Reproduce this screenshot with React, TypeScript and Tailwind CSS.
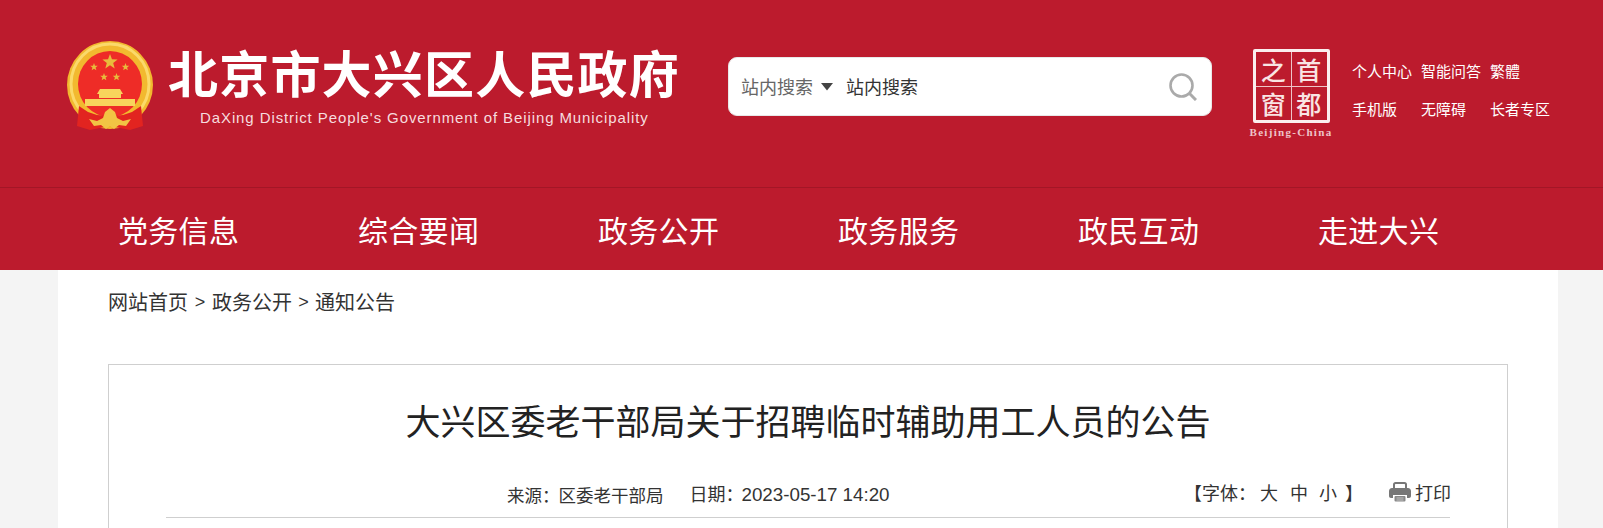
const NAV_ITEMS = ['党务信息', '综合要闻', '政务公开', '政务服务', '政民互动', '走进大兴'];

const cjk = "font-['Noto_Sans_CJK_SC','Liberation_Sans',sans-serif]";

function Star({ x, y, r }: { x: number; y: number; r: number }) {
  const points = Array.from({ length: 10 }, (_, i) => {
    const radius = i % 2 === 0 ? r : r * 0.42;
    const angle = (Math.PI / 5) * i - Math.PI / 2;
    return `${x + radius * Math.cos(angle)},${y + radius * Math.sin(angle)}`;
  }).join(' ');
  return <polygon points={points} fill="#e8bb3c" />;
}

function Emblem() {
  return (
    <svg viewBox="17 11 86 90" className="h-[90px] w-[86px] shrink-0">
      <ellipse cx="60" cy="55" rx="43" ry="44" fill="#f2b92f" />
      <ellipse cx="60" cy="54" rx="39" ry="40" fill="none" stroke="#fbd96a" strokeWidth="3" />
      <ellipse cx="60" cy="54" rx="32" ry="33" fill="#ee2c27" />
      <Star x={60} y={32} r={8} />
      <Star x={44} y={37} r={4} />
      <Star x={75.500} y={37} r={4} />
      <Star x={54} y={47} r={4} />
      <Star x={66.500} y={47} r={4} />
      <path d="M50 59h20l3 5h-2v4H49v-4h-2z" fill="#f8d45c" />
      <rect x="35" y="69" width="50" height="7" fill="#f8d45c" />
      <path d="M29 76l9 6 9 3 13 1 13-1 9-3 9-6 2 20-13 4-20-4-20 4-13-4z" fill="#e22420" />
      <path d="M39 89l8 2 6-3 2-6 5-4 5 4 2 6 6 3 8-2-5 7-7-1-5 4-4-3-4 3-5-4-7 1z" fill="#f2c444" />
    </svg>
  );
}

function SealLogo() {
  return (
    <div className="flex w-[84px] shrink-0 flex-col items-center">
      <div className="relative grid h-[74px] w-[77px] grid-cols-2 grid-rows-2 rounded-[2px] border-[3px] border-[#fbeeee] text-[25px] leading-none font-medium text-[#f9e4e4]">
        <span className="flex items-center justify-center">之</span>
        <span className="flex items-center justify-center">首</span>
        <span className="flex items-center justify-center">窗</span>
        <span className="flex items-center justify-center">都</span>
        <div className="absolute inset-x-0 top-1/2 border-t border-[#eec4c8]" />
        <div className="absolute inset-y-0 left-1/2 border-l border-[#eec4c8]" />
      </div>
      <div className="mt-[3px] whitespace-nowrap font-['Liberation_Serif',serif] text-[11px] leading-[12px] font-bold tracking-[1.3px] text-[#eec4c8]">
        Beijing-China
      </div>
    </div>
  );
}

function SearchBox() {
  return (
    <div className="ml-[50px] mt-[12px] flex h-[59px] w-[484px] shrink-0 items-center rounded-[9px] border border-[#e8e8e8] bg-white pl-[12px] pr-[14px] text-[18px]">
      <span className="text-[#666]">站内搜索</span>
      <svg viewBox="0 0 12 8" className="ml-[8px] h-[8px] w-[12px]">
        <polygon points="0,0 12,0 6,7.500" fill="#444" />
      </svg>
      <span className="ml-[13px] text-[#333]">站内搜索</span>
      <svg viewBox="0 0 28 28" className="ml-auto h-[28px] w-[28px]">
        <circle cx="12.500" cy="12.500" r="11" fill="none" stroke="#aaa" strokeWidth="2.600" />
        <path d="M20.500 20.500l6.500 6.500" stroke="#aaa" strokeWidth="3" />
      </svg>
    </div>
  );
}

function PrintIcon() {
  return (
    <svg viewBox="0 0 22 20" className="h-[20px] w-[22px]">
      <path d="M5 7V2.500C5 1.600 5.600 1 6.500 1h9c.9 0 1.500.6 1.500 1.500V7" fill="none" stroke="#777" strokeWidth="2" />
      <path d="M3 6h16c1.400 0 3 1.200 3 3v5c0 1.200-.8 2-2 2h-2v-3H4v3H2c-1.200 0-2-.8-2-2V9c0-1.800 1.600-3 3-3z" fill="#777" />
      <rect x="5.500" y="14" width="11" height="5.500" rx="1" fill="#888" />
      <path d="M7.500 16h7M7.500 18h7" stroke="#ddd" strokeWidth="0.7" />
    </svg>
  );
}

export default function App() {
  return (
    <div className={`h-[528px] w-[1603px] overflow-hidden bg-[#f4f4f4] ${cjk}`}>
      <div className="bg-[#bc1b2d] text-white">
        <header className="flex h-[188px] items-start border-b border-[#a31626] pt-[45px] pl-[67px]">
          <div className="-mt-[4px]">
            <Emblem />
          </div>
          <div className="ml-[15px] w-[510px] shrink-0">
            <div className="-mt-[4px] text-[50px] leading-[60px] font-bold tracking-[1.2px] whitespace-nowrap">北京市大兴区人民政府</div>
            <div className="mt-[7px] ml-[32px] font-['Liberation_Sans',sans-serif] text-[15px] leading-[20px] tracking-[0.9px] whitespace-nowrap text-[#f6dcdf]">
              DaXing District People's Government of Beijing Municipality
            </div>
          </div>
          <SearchBox />
          <div className="ml-[37px] mt-[4px]">
            <SealLogo />
          </div>
          <div className="ml-[19px] mt-[15px] grid grid-cols-[69px_69px_auto] gap-y-[16px] text-[15px] leading-[22px]">
            <span>个人中心</span>
            <span>智能问答</span>
            <span>繁體</span>
            <span>手机版</span>
            <span>无障碍</span>
            <span>长者专区</span>
          </div>
        </header>
        <nav className="flex h-[82px] items-center pl-[118px] text-[30px] tracking-[0.3px]">
          {NAV_ITEMS.map((item) => (
            <a key={item} className="w-[240px]">
              {item}
            </a>
          ))}
        </nav>
      </div>

      <main className="ml-[58px] w-[1500px] bg-white px-[50px] pb-[40px]">
        <div className="flex h-[94px] items-start pt-[18px] text-[20px] leading-[28px] text-[#333]">
          <span>网站首页</span>
          <span className="w-[24px] text-center font-['Liberation_Sans',sans-serif] text-[18px]">&gt;</span>
          <span>政务公开</span>
          <span className="w-[23px] text-center font-['Liberation_Sans',sans-serif] text-[18px]">&gt;</span>
          <span>通知公告</span>
        </div>
        <section className="h-[400px] border border-[#cfcfcf] px-[57px]">
          <h1 className="pt-[30px] text-center text-[35px] leading-[50px] text-[#222]">
            大兴区委老干部局关于招聘临时辅助用工人员的公告
          </h1>
          <div className="mt-[34px] flex h-[39px] items-center border-b border-[#cfcfcf] pb-[6px] text-[17.500px] text-[#333]">
            <span className="ml-[341px]">
              <span className="-mr-[1px] inline-block">来源：</span>区委老干部局
            </span>
            <span className="ml-[26px] font-['Liberation_Sans','Noto_Sans_CJK_SC',sans-serif] text-[18.750px]">
              <span className={cjk + ' -mr-[2px] inline-block text-[18px]'}>日期：</span>2023-05-17 14:20
            </span>
            <span className="-mr-[1px] mb-[6px] ml-auto flex items-center text-[18px] whitespace-nowrap">
              <span>【字体：</span>
              <span className="ml-[4px]">大</span>
              <span className="ml-[12px]">中</span>
              <span className="ml-[11px]">小</span>
              <span className="ml-[8px]">】</span>
              <span className="mr-[4px] ml-[26px]">
                <PrintIcon />
              </span>
              <span>打印</span>
            </span>
          </div>
        </section>
      </main>
    </div>
  );
}
